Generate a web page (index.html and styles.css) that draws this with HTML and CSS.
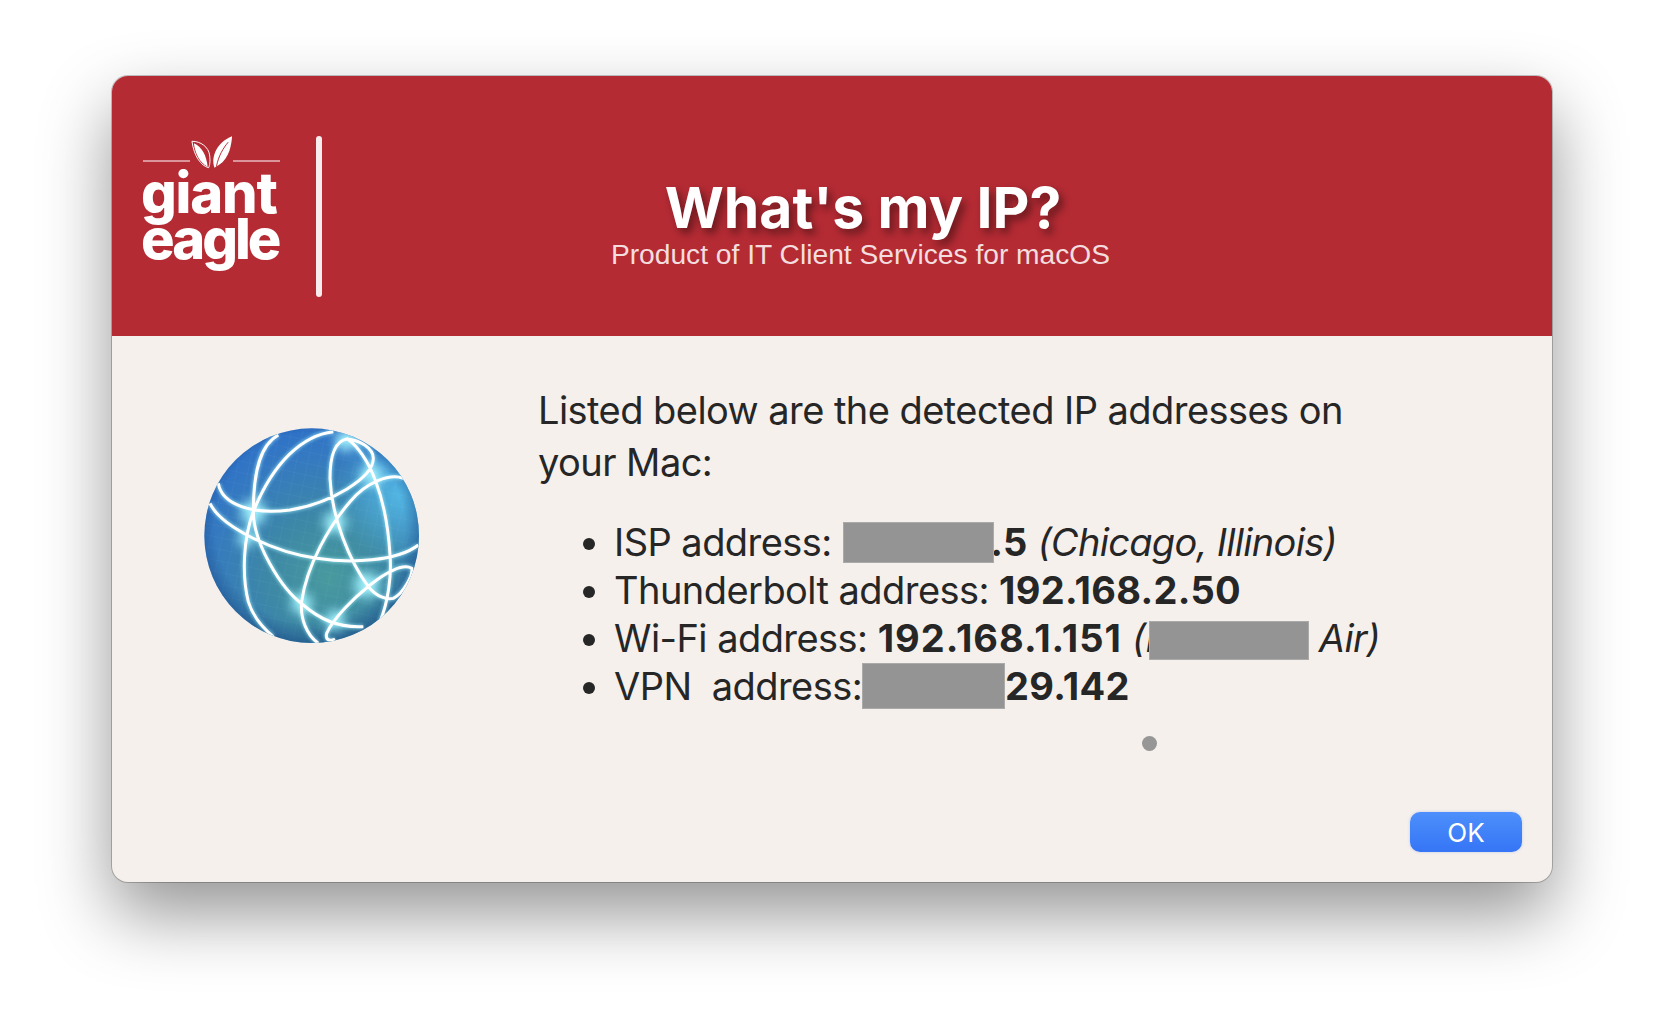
FILE: index.html
```html
<!DOCTYPE html>
<html>
  <head>
    <title>What's my IP?</title>
    <meta charset="UTF-8"/>
    <link rel="stylesheet" href="styles.css">
  </head>
  <body>
    <div class="window">
      <div class="banner">
        <div class="brand">
          <div class="leafrow">
            <span class="rule"></span>
            <svg class="leaves" width="44" height="34" viewBox="0 0 44 34">
              <path d="M2 5C11 5 19 11 20 19C21 26 20 30 19 32C11 30 4 20 2 5Z" fill="none" stroke="#fff" stroke-width="1"/>
              <path d="M4 7C12 10 17 20 18 31C10 27 5 17 4 7Z" fill="#fff"/>
              <path d="M43 0C42 14 38 26 25 32C21 22 27 6 43 0Z" fill="#fff"/>
              <path d="M39 6C34 12 29 20 27 31" fill="none" stroke="#b52b34" stroke-width="1"/>
            </svg>
            <span class="rule"></span>
          </div>
          <div class="wordmark">giant</div>
          <div class="wordmark narrow">eagle</div>
        </div>
        <div class="divider"></div>
        <div class="heading">
          <h1>What's my IP?</h1>
          <p>Product of IT Client Services for macOS</p>
        </div>
      </div>
      <div class="content">
        <div class="globe-col">
          <svg class="globe" width="240" height="240" viewBox="0 0 720 720">
            <defs>
              <radialGradient id="sea" cx="0.58" cy="0.68" r="0.72">
                <stop offset="0" stop-color="#489a9e"/>
                <stop offset="0.35" stop-color="#3d88a6"/>
                <stop offset="0.7" stop-color="#357ac0"/>
                <stop offset="1" stop-color="#2a6ccc"/>
              </radialGradient>
              <radialGradient id="sheen" cx="0.88" cy="0.33" r="0.28">
                <stop offset="0" stop-color="#5ac6ee" stop-opacity="0.8"/>
                <stop offset="1" stop-color="#5ac6ee" stop-opacity="0"/>
              </radialGradient>
              <radialGradient id="rim" cx="0.5" cy="0.47" r="0.52">
                <stop offset="0.76" stop-color="#123f7a" stop-opacity="0"/>
                <stop offset="1" stop-color="#123f7a" stop-opacity="0.75"/>
              </radialGradient>
              <pattern id="mesh" width="34" height="34" patternUnits="userSpaceOnUse" patternTransform="rotate(12)">
                <path d="M34 0H0V34" fill="none" stroke="#fff" stroke-opacity="0.09" stroke-width="2"/>
              </pattern>
              <filter id="glow" x="-20%" y="-20%" width="140%" height="140%">
                <feGaussianBlur stdDeviation="16"/>
              </filter>
              <filter id="soft" x="-20%" y="-20%" width="140%" height="140%">
                <feGaussianBlur stdDeviation="4"/>
              </filter>
              <clipPath id="ball"><circle cx="365" cy="362" r="322"/></clipPath>
              <path id="arcs" d="M85 205C95 270 190 300 300 285C420 265 550 190 550 130C550 100 510 75 470 72C430 80 420 130 420 190C425 310 480 440 535 515C560 545 590 555 610 550C640 535 670 480 665 460C640 445 590 470 540 510C490 550 430 610 410 655C405 675 420 680 435 672M60 265C90 330 240 410 380 430C480 445 620 440 685 390M265 60C210 90 190 170 190 290C190 380 270 520 340 570C380 605 440 640 520 635M430 50C340 60 250 140 190 290C160 370 155 480 175 560C190 610 220 640 250 665M640 190C600 175 530 200 480 260C420 330 350 450 335 560C330 610 350 660 385 685M470 70C540 120 590 250 600 420C605 480 595 560 570 620" fill="none"/>
            </defs>
            <g clip-path="url(#ball)">
              <rect width="720" height="720" fill="url(#sea)"/>
              <rect width="720" height="720" fill="url(#sheen)"/>
              <rect width="720" height="720" fill="url(#mesh)"/>
              <rect width="720" height="720" fill="url(#rim)"/>
              <g filter="url(#glow)" fill="#a4f4ff" opacity="0.9">
                <circle cx="190" cy="292" r="38"/>
                <circle cx="435" cy="322" r="34"/>
                <circle cx="545" cy="180" r="34"/>
                <circle cx="530" cy="510" r="38"/>
                <circle cx="335" cy="565" r="32"/>
                <circle cx="470" cy="75" r="34"/>
                <circle cx="435" cy="615" r="30"/>
                <circle cx="170" cy="370" r="26"/>
              </g>
              <use href="#arcs" stroke="#a8f4ff" stroke-width="16" filter="url(#soft)" opacity="0.5"/>
              <use href="#arcs" stroke="#fff" stroke-width="9"/>
            </g>
          </svg>
        </div>
        <div class="details">
          <p class="intro">Listed below are the detected IP addresses on your Mac:</p>
          <ul class="addrs">
            <li>ISP address: <b>1<span class="redact isp"></span>7.5</b> <i>(Chicago, Illinois)</i></li>
            <li>Thunderbolt address: <b>192.168.2.50</b></li>
            <li>Wi-Fi address: <b class="spaced">192.168.1.151</b> <i>(M<span class="redact wifi"></span>Air)</i></li>
            <li>VPN&nbsp; address:<span class="redact vpn"></span><b>29.142</b></li>
          </ul>
          <div class="dot"></div>
        </div>
      </div>
      <div class="actions">
        <button class="ok">OK</button>
      </div>
    </div>
  </body>
</html>
```

FILE: styles.css
```css
html, body {
  margin: 0;
  height: 100%;
  background: #fff;
  overflow: hidden;
}
body {
  padding: 76px 112px 148px;
  box-sizing: border-box;
  font-family: 'Inter', sans-serif;
  color: #262626;
}
.window {
  display: flex;
  flex-direction: column;
  height: 806px;
  border-radius: 16px;
  overflow: hidden;
  background: #f5f0ec;
  box-shadow: 0 0 0 1px rgba(0,0,0,0.22), 0 32px 70px rgba(0,0,0,0.42);
}
.banner {
  display: flex;
  align-items: center;
  height: 260px;
  flex: none;
  background: #b52b34;
  color: #fff;
}
.brand {
  width: 137px;
  margin-left: 31px;
  flex: none;
  padding-bottom: 14px;
}
.leafrow {
  display: flex;
  align-items: flex-end;
  justify-content: space-between;
  height: 34px;
}
.rule {
  width: 48px;
  height: 2px;
  margin-bottom: 8px;
  background: rgba(255,255,255,0.5);
}
.wordmark {
  margin-left: -2px;
  font-weight: 800;
  font-size: 56px;
  line-height: 46px;
  letter-spacing: -1.2px;
}
.narrow {
  letter-spacing: -3px;
}
.divider {
  flex: none;
  width: 6px;
  height: 161px;
  margin-left: 36px;
  margin-top: 20px;
  border-radius: 3px;
  background: #f8eced;
}
.heading {
  flex: 1;
  padding: 38px 148px 0 0;
  text-align: center;
}
.heading h1 {
  margin: 0;
  font-size: 57px;
  font-weight: 700;
  line-height: 58px;
  text-shadow: 4px 5px 9px rgba(0,0,0,0.45);
}
.heading p {
  margin: 0;
  padding-right: 5px;
  font-family: 'Liberation Sans', sans-serif;
  font-size: 28.2px;
  line-height: 34px;
  color: rgba(255,255,255,0.85);
}
.content {
  display: flex;
  flex: 1;
  min-height: 0;
}
.globe-col {
  width: 426px;
  flex: none;
  padding: 79px 0 0 78px;
  box-sizing: border-box;
}
.globe {
  display: block;
}
.details {
  flex: 1;
  padding: 48px 130px 0 0;
  font-size: 38px;
  letter-spacing: -0.55px;
}
.intro {
  margin: 0 20px 30px 0;
  line-height: 52px;
}
.addrs {
  margin: 0;
  padding-left: 76px;
  line-height: 48px;
}
.addrs b {
  font-weight: 700;
  letter-spacing: 0.3px;
}
.addrs .spaced {
  letter-spacing: 1px;
}
.addrs i {
  letter-spacing: -0.7px;
}
.redact {
  position: relative;
  z-index: 1;
  display: inline-block;
  vertical-align: middle;
  box-sizing: border-box;
  background: #949494;
  border: 1px solid #aaa;
}
.isp {
  top: -3px;
  width: 151px;
  height: 41px;
  margin: 0 -21px 0 -16px;
}
.wifi {
  top: -1px;
  width: 160px;
  height: 39px;
  margin: 0 10px 0 -30px;
}
.vpn {
  top: -4px;
  width: 143px;
  height: 46px;
}
.dot {
  width: 15px;
  height: 15px;
  margin: 23px 0 0 604px;
  border-radius: 50%;
  background: #969696;
}
.actions {
  display: flex;
  justify-content: flex-end;
  flex: none;
  padding: 0 30px 30px 0;
}
.ok {
  width: 112px;
  height: 40px;
  padding: 0;
  border: 0;
  border-radius: 10px;
  background: linear-gradient(#4d8ffb, #3575f6);
  box-shadow: 0 0 3px rgba(60,120,240,0.3);
  font-family: 'Inter', sans-serif;
  font-size: 26px;
  color: #fff;
}
```
